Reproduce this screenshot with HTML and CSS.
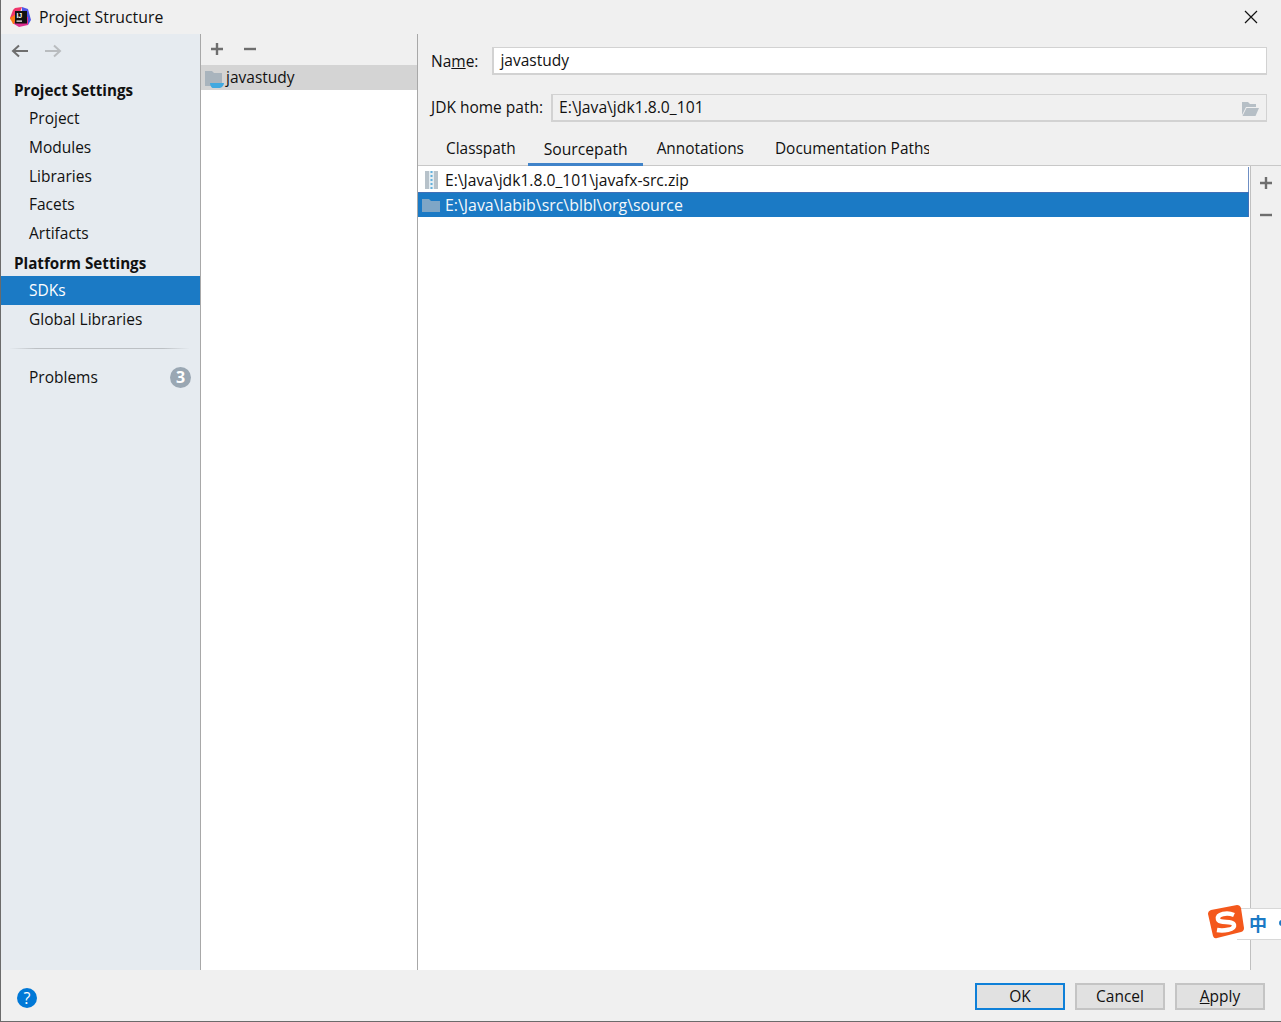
FILE: index.html
```html
<!DOCTYPE html>
<html lang="en">
<head>
  <meta charset="UTF-8">
  <title>Project Structure</title>
  <link rel="stylesheet" href="styles.css">
</head>
<body>
  <div class="window">
    <div class="titlebar">
      <svg class="app-logo" width="21" height="20" viewBox="0 0 21 20">
        <path d="M5 1 L12 0 L9 8 L1 13 L0 11 L3 3 Z" fill="#f0356b"/>
        <path d="M0 11 L6 7 L6 17 L3 17 Z" fill="#f97a12"/>
        <path d="M12 0 L18 2 L21 13 L18 18 L12 10 Z" fill="#4f55e6"/>
        <path d="M4 17 L9 20 L18 18 L18 10 L6 10 Z" fill="#dd2e8f"/>
        <rect x="5" y="4" width="12" height="12.5" fill="#111"/>
        <text x="6.4" y="11" class="logo-text">IJ</text>
        <rect x="6.5" y="13.5" width="5.5" height="1.2" fill="#fff"/>
      </svg>
      <span class="title">Project Structure</span>
      <svg class="close" width="14" height="14" viewBox="0 0 14 14">
        <path d="M1 1 L13 13 M13 1 L1 13" stroke="#111" stroke-width="1.2" fill="none"/>
      </svg>
    </div>

    <div class="main">
      <div class="sidebar">
        <div class="nav-arrows">
          <svg width="18" height="14" viewBox="0 0 18 14">
            <path d="M17 7 H2 M8 1.5 L2 7 L8 12.5" stroke="#6e6e6e" stroke-width="2" fill="none"/>
          </svg>
          <svg width="18" height="14" viewBox="0 0 18 14">
            <path d="M1 7 H16 M10 1.5 L16 7 L10 12.5" stroke="#b9bcbf" stroke-width="2" fill="none"/>
          </svg>
        </div>
        <div class="nav-head first">Project Settings</div>
        <div class="nav-item">Project</div>
        <div class="nav-item">Modules</div>
        <div class="nav-item">Libraries</div>
        <div class="nav-item">Facets</div>
        <div class="nav-item">Artifacts</div>
        <div class="nav-head">Platform Settings</div>
        <div class="nav-item active">SDKs</div>
        <div class="nav-item">Global Libraries</div>
        <div class="nav-sep"></div>
        <div class="nav-item problems">Problems <span class="badge">3</span></div>
      </div>

      <div class="sdk-col">
        <div class="sdk-tools">
          <svg width="14" height="14" viewBox="0 0 14 14">
            <path d="M7 1 V13 M1 7 H13" stroke="#6e6e6e" stroke-width="2.4"/>
          </svg>
          <svg width="14" height="14" viewBox="0 0 14 14">
            <path d="M1 7 H13" stroke="#6e6e6e" stroke-width="2.4"/>
          </svg>
        </div>
        <div class="sdk-row">
          <svg width="20" height="20" viewBox="0 0 20 20">
            <path d="M0 3 H7 L9 5 H17 V18 H0 Z" fill="#a9b4bd"/>
            <path d="M5 15 H19 C19 18 16 20.5 12 20.5 H9 C7 20.5 5 18 5 15 Z" fill="#40a9e0"/>
          </svg>
          <span>javastudy</span>
        </div>
      </div>

      <div class="detail">
        <div class="form-row name-row">
          <label class="label-name">Na<u>m</u>e:</label>
          <div class="field">javastudy</div>
        </div>
        <div class="form-row home-row">
          <label class="label-home">JDK home path:</label>
          <div class="field readonly">
            E:\Java\jdk1.8.0_101
            <svg class="browse" width="18" height="16" viewBox="0 0 18 16">
              <path d="M1 1 H7 L9 3 H15 V6 H5 L1 14 Z" fill="#b6bfc6"/>
              <path d="M5.5 7 H18 L14.5 15 H1.5 Z" fill="#b6bfc6"/>
            </svg>
          </div>
        </div>
        <div class="tabs">
          <div class="tab">Classpath</div>
          <div class="tab selected">Sourcepath</div>
          <div class="tab">Annotations</div>
          <div class="tab doc">Documentation Paths</div>
        </div>
        <div class="paths">
          <div class="path-list">
            <div class="path-row">
              <svg width="16" height="18" viewBox="0 0 16 18">
                <rect x="2" y="0" width="13" height="18" fill="#b7c2ca"/>
                <rect x="6" y="0" width="5" height="18" fill="#e4edf2"/>
                <path d="M8.5 0 V18" stroke="#62b0dc" stroke-width="2" stroke-dasharray="2 2"/>
              </svg>
              <span>E:\Java\jdk1.8.0_101\javafx-src.zip</span>
            </div>
            <div class="path-row selected">
              <svg width="18" height="14" viewBox="0 0 18 14">
                <path d="M0 1 H7 L9 3 H18 V14 H0 Z" fill="#7fa6c6"/>
              </svg>
              <span>E:\Java\labib\src\blbl\org\source</span>
            </div>
          </div>
          <div class="path-tools">
            <svg width="14" height="14" viewBox="0 0 14 14">
              <path d="M7 1 V13 M1 7 H13" stroke="#6e6e6e" stroke-width="2.4"/>
            </svg>
            <svg width="14" height="14" viewBox="0 0 14 14">
              <path d="M1 7 H13" stroke="#6e6e6e" stroke-width="2.4"/>
            </svg>
          </div>
        </div>
      </div>
    </div>

    <div class="footer">
      <div class="help">?</div>
      <div class="buttons">
        <button class="btn default">OK</button>
        <button class="btn">Cancel</button>
        <button class="btn"><u>A</u>pply</button>
      </div>
    </div>

    <div class="ime">
      <svg class="ime-logo" width="38" height="36" viewBox="0 0 38 36">
        <path d="M4 5 L30 0 Q33 0 34 3 L37 23 Q37 26 34 27 L10 33 Q7 34 6 31 L1 9 Q1 6 4 5 Z" fill="#f4581c"/>
        <path d="M27 10 C20 7 10 9 11 14 C12 19 26 15 27 20 C28 25 16 26 10 25" stroke="#fff" stroke-width="4.5" fill="none"/>
      </svg>
      <span class="ime-zh">中</span>
      <span class="ime-dot"></span>
    </div>
  </div>
</body>
</html>
```

FILE: styles.css
```css
* {
  box-sizing: border-box;
}

html, body {
  margin: 0;
  height: 100%;
}

body {
  font-family: "Open Sans", "Noto Sans", sans-serif;
  font-size: 15.5px;
  color: #111;
  background: #f0f0f0;
  overflow: hidden;
}

.window {
  position: relative;
  width: 1281px;
  height: 1022px;
  display: flex;
  flex-direction: column;
  border-left: 1px solid #6b6b6b;
  border-bottom: 1px solid #6b6b6b;
  overflow: hidden;
}

.titlebar {
  height: 34px;
  flex: none;
  display: flex;
  align-items: center;
  padding-left: 9px;
  background: #f0f0f0;
}

.logo-text {
  font-family: "Liberation Sans", sans-serif;
  font-size: 7px;
  font-weight: 700;
  fill: #fff;
}

.title {
  margin-left: 8px;
  font-size: 15.8px;
}

.close {
  margin-left: auto;
  margin-right: 23px;
}

.main {
  flex: 1;
  display: flex;
  min-height: 0;
}

/* left nav */
.sidebar {
  width: 200px;
  flex: none;
  background: #e6ebf0;
  border-right: 1px solid #a8a8a8;
}

.nav-arrows {
  height: 34px;
  display: flex;
  align-items: center;
  gap: 15px;
  padding-left: 10px;
}

.nav-head {
  height: 28px;
  line-height: 31px;
  padding-left: 13px;
  font-size: 15.2px;
  font-weight: 700;
}

.nav-head.first {
  margin-top: 8px;
  line-height: 29px;
}

.nav-item {
  height: 28.75px;
  line-height: 28px;
  padding-left: 28px;
}

.nav-item.active {
  background: #1b7ac5;
  color: #fff;
}

.nav-sep {
  height: 1px;
  margin: 15px 10px 14px 8px;
  background: linear-gradient(to right, #e6ebf0, #bcc0c4 15%, #bcc0c4 85%, #e6ebf0);
}

.problems {
  position: relative;
}

.badge {
  position: absolute;
  right: 9px;
  top: 4px;
  width: 21px;
  height: 21px;
  border-radius: 50%;
  background: #9aa7b3;
  color: #fff;
  font-size: 16px;
  font-weight: 700;
  line-height: 21px;
  text-align: center;
}

/* sdk list */
.sdk-col {
  width: 217px;
  flex: none;
  background: #fff;
  border-right: 1px solid #a8a8a8;
}

.sdk-tools {
  height: 31px;
  background: #f0f0f0;
  display: flex;
  align-items: center;
  gap: 19px;
  padding: 0 0 2px 9px;
}

.sdk-row {
  height: 25px;
  background: #d4d4d4;
  display: flex;
  align-items: center;
  padding-left: 4px;
  gap: 1px;
}

.sdk-row span {
  margin-top: -2px;
}

/* right side */
.detail {
  flex: 1;
  display: flex;
  flex-direction: column;
  min-width: 0;
  background: #f0f0f0;
}

.form-row {
  display: flex;
  align-items: center;
  padding: 0 14px 0 13px;
}

.name-row {
  margin-top: 13px;
}

.home-row {
  margin-top: 19px;
}

.form-row label {
  margin-right: 8px;
}

.form-row .label-name {
  margin-right: 14px;
}

.form-row .label-home {
  margin-top: -2px;
}

.field {
  position: relative;
  flex: 1;
  height: 28px;
  line-height: 24px;
  padding: 0 6px;
  background: #fff;
  border: 2px solid #d2d2d2;
  border-width: 1px 1px 2px 2px;
}

.field.readonly {
  background: #f0f0f0;
  font-size: 15.7px;
}

.browse {
  position: absolute;
  right: 7px;
  top: 6px;
}

.tabs {
  display: flex;
  height: 32px;
  margin-top: 12px;
  padding-left: 14px;
  border-bottom: 1px solid #c8c8c8;
  flex: none;
  font-size: 15.4px;
}

.tab {
  padding: 3px 14px 0;
  line-height: 24px;
}

.tab.selected {
  padding-left: 16px;
  padding-right: 15px;
  height: 32px;
  margin-left: -2px;
  border-bottom: 3px solid #4083c9;
  font-size: 15.7px;
}

.tab.doc {
  width: 171px;
  overflow: hidden;
  white-space: nowrap;
  padding-left: 17px;
  padding-right: 0;
}

.paths {
  flex: 1;
  display: flex;
  min-height: 0;
}

.path-list {
  flex: 1;
  min-width: 0;
  background: #fff;
  padding: 1px 1px 0 0;
  font-size: 15.65px;
}

.path-row {
  height: 25px;
  display: flex;
  align-items: center;
  padding-left: 4px;
  gap: 5px;
  border-right: 1px solid #6f8fc4;
}

.path-row svg {
  width: 18px;
  flex: none;
}

.path-row.selected {
  background: #1b7ac5;
  color: #f4f8fb;
  border-top: 1px solid #4070b8;
  border-right: 1px solid #4070b8;
  font-size: 15.9px;
}

.path-tools {
  width: 31px;
  flex: none;
  border-left: 1px solid #c0c0c0;
  display: flex;
  flex-direction: column;
  align-items: center;
  gap: 18px;
  padding-top: 10px;
}

/* bottom bar */
.footer {
  height: 51px;
  flex: none;
  display: flex;
  align-items: center;
  justify-content: space-between;
  padding: 0 16px 0 16px;
  background: #f0f0f0;
}

.help {
  width: 20px;
  height: 20px;
  margin-top: 4px;
  border-radius: 50%;
  background: #0078d7;
  color: #fff;
  font-size: 16px;
  line-height: 20px;
  text-align: center;
}

.buttons {
  display: flex;
  gap: 10px;
  margin-top: 1px;
}

.btn {
  width: 90px;
  height: 27px;
  padding: 0 0 6px;
  font-family: inherit;
  font-size: 15.5px;
  color: #111;
  background: #e1e1e1;
  border: 2px solid #c4c4c4;
}

.btn.default {
  border-color: #0f80d8;
}

/* sogou ime floating bar */
.ime {
  position: absolute;
  left: 1206px;
  top: 905px;
  width: 75px;
  height: 36px;
}

.ime::before {
  content: "";
  position: absolute;
  left: 30px;
  top: 3px;
  right: 0;
  height: 30px;
  background: #fff;
  border: 1px solid #d8d8d8;
  border-left: none;
  border-right: none;
}

.ime-logo {
  position: absolute;
  left: 0;
  top: 0;
}

.ime-zh {
  position: absolute;
  left: 42px;
  top: 5px;
  font-family: "Noto Sans CJK SC", sans-serif;
  font-size: 18px;
  font-weight: 700;
  line-height: 26px;
  color: #1b7ac5;
}

.ime-dot {
  position: absolute;
  left: 72px;
  top: 15px;
  width: 6px;
  height: 6px;
  border-radius: 50%;
  background: #1b7ac5;
}
```
